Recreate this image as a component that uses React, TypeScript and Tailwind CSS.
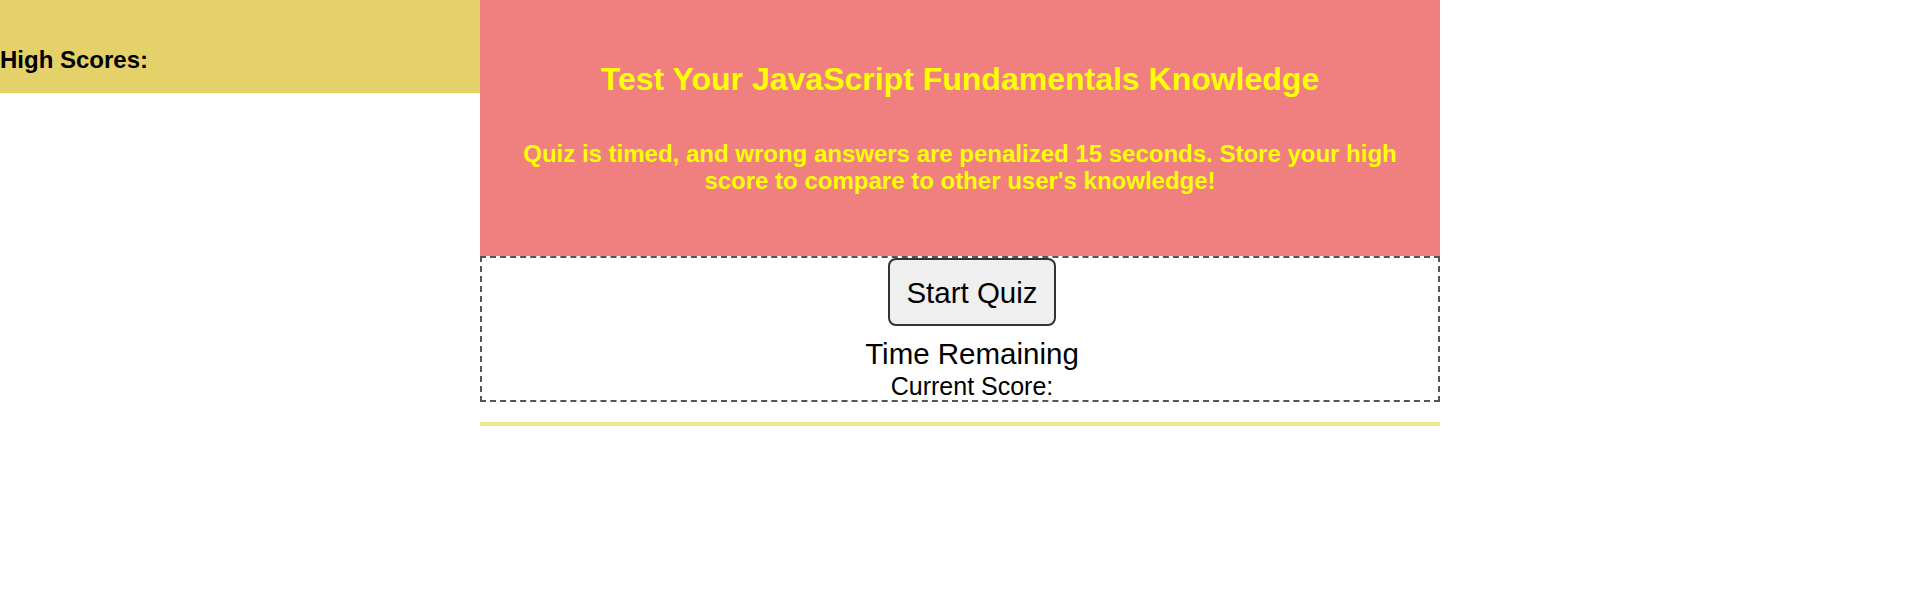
import React from "react";

export default function App() {
  return (
    <div className="flex min-h-[613px] w-full items-start bg-white font-['Liberation_Sans',Arial,sans-serif]">
      {/* High scores sidebar */}
      <aside className="h-[93px] w-[480px] shrink-0 bg-[#e5d16a] pt-[46px]">
        <h2 className="text-[24px] font-bold leading-[27.6px] text-black">High Scores:</h2>
      </aside>

      {/* Main quiz column */}
      <main className="w-[960px] shrink-0">
        <header className="h-[256px] bg-[#f08080] px-[20px] pt-[61px] text-center text-[#ffff00]">
          <h1 className="text-[32px] font-bold leading-[36.8px]">
            Test Your JavaScript Fundamentals Knowledge
          </h1>
          <p className="mt-[42px] text-[24px] font-bold leading-[27.6px]">
            Quiz is timed, and wrong answers are penalized 15 seconds. Store your high score to compare to other user's knowledge!
          </p>
        </header>

        <section className="flex flex-col items-center border-2 border-dashed border-[#555555] pl-[24px] text-black">
          <button className="h-[68px] w-[168px] rounded-[8px] border-2 border-[#333333] bg-[#efefef] pt-[2px] text-[29.5px] leading-none">
            Start Quiz
          </button>
          <div className="mt-[11px] text-[29.5px] leading-[34px]">Time Remaining</div>
          <div className="pt-[1px] text-[25px] leading-[28px]">Current Score:</div>
        </section>

        <div className="mt-[20px] h-[4px] bg-[#f0e68c]" />
      </main>
    </div>
  );
}
